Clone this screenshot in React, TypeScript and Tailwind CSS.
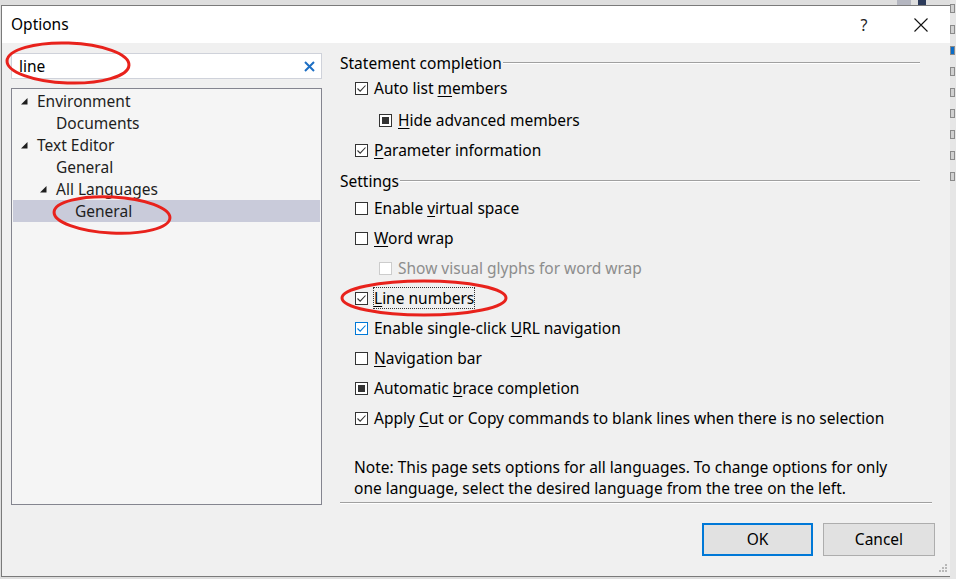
import React from 'react';

type CheckState = 'checked' | 'unchecked' | 'mixed';

function CheckBox({ state, disabled, hot }: { state: CheckState; disabled?: boolean; hot?: boolean }) {
  const border = disabled ? 'border-[#cccccc]' : hot ? 'border-[#0078d7]' : 'border-[#333333]';
  return (
    <span className={`relative flex h-[13px] w-[13px] shrink-0 items-center justify-center border bg-white ${border}`}>
      {state === 'checked' && (
        <svg width="11" height="11" viewBox="0 0 11 11">
          <path d="M1.5 5.5 L4.2 8.2 L9.5 2.5" fill="none" stroke={hot ? '#0078d7' : '#333333'} strokeWidth="1.1" />
        </svg>
      )}
      {state === 'mixed' && <span className="h-[7px] w-[7px] bg-[#333333]" />}
    </span>
  );
}

// label with an underlined access key
function Label({ text, k }: { text: string; k?: number }) {
  if (k === undefined) return <>{text}</>;
  return (
    <>
      {text.slice(0, k)}
      <span className="underline underline-offset-2">{text[k]}</span>
      {text.slice(k + 1)}
    </>
  );
}

function Option({
  text,
  k,
  state,
  indent,
  disabled,
  hot,
  focus,
  className = '',
}: {
  text: string;
  k?: number;
  state: CheckState;
  indent?: boolean;
  disabled?: boolean;
  hot?: boolean;
  focus?: boolean;
  className?: string;
}) {
  return (
    <div className={`flex h-[30px] items-center gap-[6px] ${indent ? 'pl-[39px]' : 'pl-[15px]'} ${className}`}>
      <CheckBox state={state} disabled={disabled} hot={hot} />
      <span
        className={`leading-[20px] ${disabled ? 'text-[#8d8d8d]' : 'text-black'} ${
          focus ? 'outline outline-1 outline-dotted outline-[#333]' : ''
        }`}
      >
        <Label text={text} k={k} />
      </span>
    </div>
  );
}

function GroupHeader({ title, className = '' }: { title: string; className?: string }) {
  return (
    <div className={`mr-[12px] flex items-center gap-[1px] ${className}`}>
      <span className="pt-[2px] text-black">{title}</span>
      <div className="flex-1">
        <div className="h-px bg-[#a0a0a0]" />
        <div className="h-px bg-white" />
      </div>
    </div>
  );
}

function Tri() {
  return (
    <svg width="7" height="7" viewBox="0 0 7 7" className="shrink-0">
      <path d="M6.5 0 L6.5 6.5 L0 6.5 Z" fill="#1e1e1e" />
    </svg>
  );
}

function TreeRow({ level, text, open, selected }: { level: number; text: string; open?: boolean; selected?: boolean }) {
  const pad = ['pl-[8px]', 'pl-[27px]', 'pl-[46px]'][level];
  return (
    <div className={`flex h-[22px] items-center ${selected ? 'bg-[#c9cbda]' : ''} ${pad}`}>
      <span className="flex w-[16px] items-center">{open && <Tri />}</span>
      <span className="pt-[2px] text-[#1e1e1e]">{text}</span>
    </div>
  );
}

export default function App() {
  return (
    <div
      className="relative h-[579px] w-[956px] overflow-hidden bg-[#dedede] pl-[1px] pt-[5px] text-[15.5px]"
      style={{ fontFamily: '"Noto Sans", "Open Sans", sans-serif' }}
    >
      {/* bits of the desktop behind the dialog */}
      <div className="absolute right-0 top-0 flex h-full w-[6px] flex-col gap-[12px] bg-[#e6e6e6] pt-[4px]">
        {Array.from({ length: 9 }).map((_, i) => (
          <div key={i} className={`h-[9px] w-[5px] border border-[#8a8a8a] ${i === 2 ? 'bg-[#0a6cc7]' : 'bg-[#d0d0d0]'}`} />
        ))}
      </div>
      <div className="absolute left-[897px] top-0 h-[5px] w-[14px] bg-[#b4b6c0]" />
      <div className="absolute left-[918px] top-0 h-[5px] w-[8px] bg-[#2b3a5a]" />

      <div className="flex h-[572px] w-[950px] flex-col border border-[#7a7a7a] bg-[#f0f0f0]">
        {/* title bar */}
        <div className="flex h-[37px] items-center bg-white pl-[9px]">
          <span className="text-[15.5px] text-black">Options</span>
          <div className="flex-1" />
          <span className="w-[20px] text-center text-[16px] text-[#222]">?</span>
          <div className="w-[18px]" />
          <div className="flex w-[58px] justify-center">
            <svg width="14" height="14" viewBox="0 0 14 14">
              <path d="M0.5 0.5 L13.5 13.5 M13.5 0.5 L0.5 13.5" stroke="#111" strokeWidth="1.1" />
            </svg>
          </div>
        </div>

        {/* body */}
        <div className="flex flex-1 pl-[9px] pt-[10px]">
          {/* left column */}
          <div className="flex w-[311px] flex-col gap-[9px]">
            <div className="flex h-[26px] items-center border border-[#cfd2da] bg-white pl-[7px] pr-[6px]">
              <span className="flex-1 pt-[2px] text-black">line</span>
              <svg width="11" height="11" viewBox="0 0 11 11">
                <path d="M1 1 L10 10 M10 1 L1 10" stroke="#1e6fc4" strokeWidth="2" />
              </svg>
            </div>
            <div className="h-[417px] border border-[#84858f] bg-[#f5f5f5] px-px pt-px">
              <TreeRow level={0} text="Environment" open />
              <TreeRow level={1} text="Documents" />
              <TreeRow level={0} text="Text Editor" open />
              <TreeRow level={1} text="General" />
              <TreeRow level={1} text="All Languages" open />
              <TreeRow level={2} text="General" selected />
            </div>
          </div>

          {/* right column */}
          <div className="ml-[18px] flex w-[592px] flex-col">
            <GroupHeader title="Statement completion" className="h-[20px]" />
            <Option text="Auto list members" k={10} state="checked" />
            <Option text="Hide advanced members" k={0} state="mixed" indent className="mt-[2px]" />
            <Option text="Parameter information" k={0} state="checked" />
            <GroupHeader title="Settings" className="mt-[4px] h-[24px]" />
            <Option text="Enable virtual space" k={7} state="unchecked" />
            <Option text="Word wrap" k={0} state="unchecked" />
            <Option text="Show visual glyphs for word wrap" state="unchecked" indent disabled />
            <Option text="Line numbers" k={0} state="checked" focus />
            <Option text="Enable single-click URL navigation" k={20} state="checked" hot />
            <Option text="Navigation bar" k={0} state="unchecked" />
            <Option text="Automatic brace completion" k={10} state="mixed" />
            <Option text="Apply Cut or Copy commands to blank lines when there is no selection" k={6} state="checked" />

            <p className="mt-[24px] pl-[14px] leading-[21px] text-black">
              Note: This page sets options for all languages. To change options for only
              <br />
              one language, select the desired language from the tree on the left.
            </p>
            <div className="mt-[3px] w-[592px]">
              <div className="h-px bg-[#a0a0a0]" />
              <div className="h-px bg-white" />
            </div>

            <div className="-mr-[3px] mt-[19px] flex justify-end gap-[10px]">
              <button className="h-[33px] w-[111px] border-2 border-[#0078d7] bg-[#e1e1e1] text-black">OK</button>
              <button className="h-[33px] w-[112px] border border-[#adadad] bg-[#e1e1e1] text-black">Cancel</button>
            </div>
          </div>
        </div>

        {/* resize grip */}
        <div className="relative h-0">
          <svg width="10" height="10" viewBox="0 0 10 10" className="absolute bottom-[3px] right-[2px]">
            <rect x="7" y="1" width="2" height="2" fill="#b8b8b8" />
            <rect x="4" y="4" width="2" height="2" fill="#b8b8b8" />
            <rect x="7" y="4" width="2" height="2" fill="#b8b8b8" />
            <rect x="1" y="7" width="2" height="2" fill="#b8b8b8" />
            <rect x="4" y="7" width="2" height="2" fill="#b8b8b8" />
            <rect x="7" y="7" width="2" height="2" fill="#b8b8b8" />
          </svg>
        </div>
      </div>

      {/* red hand-drawn annotations */}
      <svg className="pointer-events-none absolute left-0 top-0" width="956" height="579">
        <ellipse cx="68" cy="63" rx="61" ry="20" fill="none" stroke="#e8221c" strokeWidth="3" transform="rotate(2 68 63)" />
        <ellipse cx="112" cy="215" rx="58" ry="18" fill="none" stroke="#e8221c" strokeWidth="3" transform="rotate(3 112 215)" />
        <ellipse cx="424" cy="298" rx="82" ry="17" fill="none" stroke="#e8221c" strokeWidth="3" />
      </svg>
    </div>
  );
}
